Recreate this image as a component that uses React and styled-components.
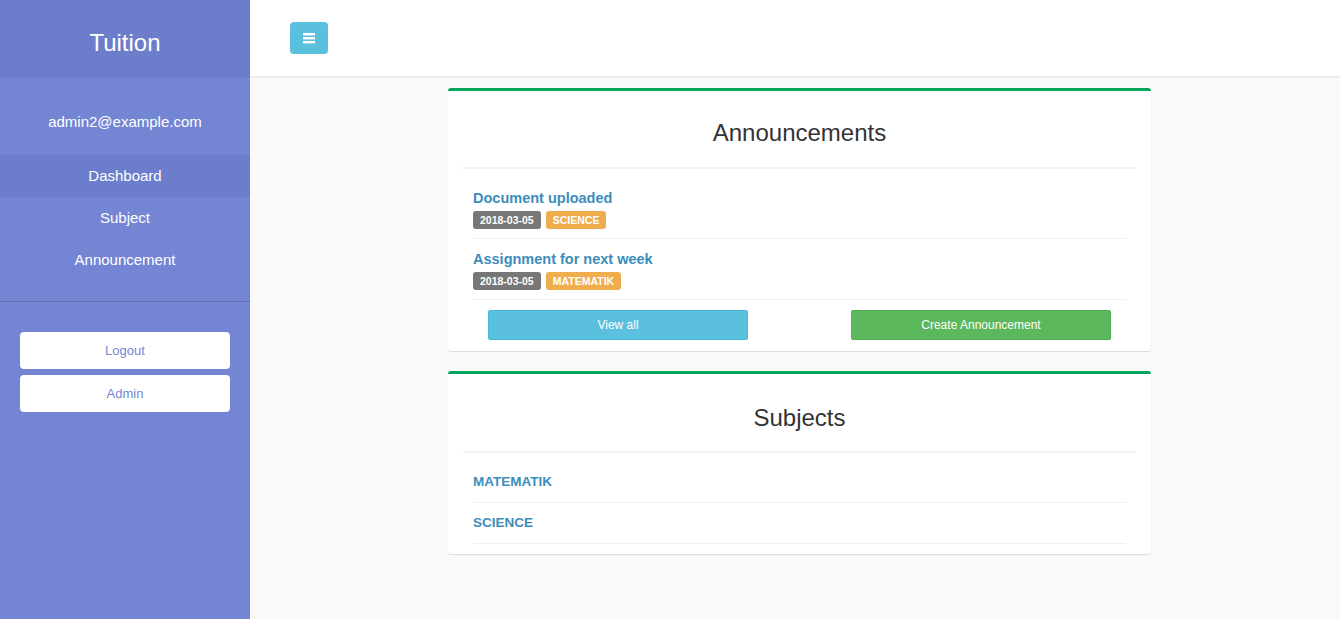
import * as React from 'react';
import styled, { createGlobalStyle } from 'styled-components';

const GlobalStyle = createGlobalStyle`
  html, body {
    margin: 0;
    padding: 0;
    height: 100%;
  }
  body {
    font-family: "Liberation Sans", Arial, sans-serif;
    font-size: 14px;
    color: #333;
    background: #f9f9f9;
  }
  * {
    box-sizing: border-box;
  }
`;

const Layout = styled.div`
  display: flex;
  min-height: 619px;
`;

const Sidebar = styled.aside`
  width: 250px;
  flex-shrink: 0;
  background: #7485d4;
  color: #fff;
  display: flex;
  flex-direction: column;
`;

const Brand = styled.div`
  height: 78px;
  background: #6c7ecb;
  display: flex;
  align-items: center;
  justify-content: center;
  font-size: 24px;
  padding-top: 8px;
`;

const UserEmail = styled.div`
  height: 77px;
  display: flex;
  align-items: center;
  justify-content: center;
  font-size: 15px;
  padding-top: 9px;
`;

const Nav = styled.nav`
  display: flex;
  flex-direction: column;
  padding-bottom: 20px;
  border-bottom: 1px solid #5d6fae;
`;

const NavItem = styled.a`
  height: 42px;
  display: flex;
  align-items: center;
  justify-content: center;
  font-size: 15px;
  color: #fff;
  text-decoration: none;
  padding-bottom: 2px;
  background: ${p => (p.active ? '#6c7ecb' : 'transparent')};
`;

const SideActions = styled.div`
  display: flex;
  flex-direction: column;
  gap: 6px;
  padding: 30px 20px;
`;

const SideButton = styled.button`
  height: 37px;
  border: none;
  border-radius: 4px;
  background: #fff;
  color: #7485d4;
  font-family: "Liberation Sans", Arial, sans-serif;
  font-size: 13px;
`;

const Main = styled.div`
  flex: 1;
  display: flex;
  flex-direction: column;
`;

const Topbar = styled.header`
  height: 76px;
  background: #fff;
  box-shadow: 0 1px 2px rgba(0, 0, 0, 0.1);
  display: flex;
  align-items: center;
  padding: 0 40px;
`;

const Toggle = styled.button`
  width: 38px;
  height: 32px;
  border: none;
  border-radius: 4px;
  background: #5bc0de;
  display: flex;
  align-items: center;
  justify-content: center;
  padding: 0;
`;

const Content = styled.main`
  padding: 12px 0 40px 198px;
  display: flex;
  flex-direction: column;
  gap: 20px;
`;

const Card = styled.section`
  width: 703px;
  background: #fff;
  border-top: 3px solid #00a65a;
  border-radius: 3px;
  box-shadow: 0 1px 1px rgba(0, 0, 0, 0.12);
`;

const CardHeader = styled.div`
  margin: 0 15px;
  padding: ${p => (p.tall ? '31px 0 20px' : '29px 0 21px')};
  border-bottom: 2px solid #f1f1f1;
  text-align: center;
`;

const CardTitle = styled.h3`
  margin: 0;
  font-size: 24px;
  font-weight: normal;
  line-height: 26px;
  color: #333;
`;

const List = styled.ul`
  list-style: none;
  margin: 9px 25px 0;
  padding: 0;
`;

const Item = styled.li`
  padding: 10px 0 ${p => (p.compact ? '10px' : '9px')};
  border-bottom: 1px solid #f0f0f0;
`;

const ItemTitle = styled.a`
  display: block;
  font-size: ${p => (p.upper ? '13.5px' : '14.5px')};
  line-height: 20px;
  font-weight: bold;
  color: #3c8dbc;
  text-decoration: none;
  text-transform: ${p => (p.upper ? 'uppercase' : 'none')};
`;

const Labels = styled.div`
  display: flex;
  gap: 5px;
  margin-top: 3px;
`;

const Label = styled.span`
  display: inline-block;
  height: 18px;
  line-height: 18px;
  padding: 0 7px;
  border-radius: 3px;
  font-size: 10.5px;
  font-weight: bold;
  color: #fff;
  background: ${p => p.bg};
`;

const CardFooter = styled.div`
  display: flex;
  justify-content: space-between;
  padding: 10px 40px 11px;
`;

const FooterButton = styled.button`
  width: 260px;
  height: 30px;
  border-radius: 2px;
  border: 1px solid ${p => p.border};
  background: ${p => p.bg};
  color: #fff;
  font-family: "Liberation Sans", Arial, sans-serif;
  font-size: 12px;
`;

const SubjectFooter = styled.div`
  height: 10px;
`;

function MenuIcon() {
  return (
    <svg width="12" height="12" viewBox="0 0 12 12">
      <rect x="0" y="1" width="12" height="2.4" fill="#fff" />
      <rect x="0" y="5" width="12" height="2.4" fill="#fff" />
      <rect x="0" y="9" width="12" height="2.4" fill="#fff" />
    </svg>
  );
}

const announcements = [
  { title: 'Document uploaded', date: '2018-03-05', subject: 'SCIENCE' },
  { title: 'Assignment for next week', date: '2018-03-05', subject: 'MATEMATIK' },
];

const subjects = ['MATEMATIK', 'SCIENCE'];

export default function App() {
  return (
    <>
      <GlobalStyle />
      <Layout>
        <Sidebar>
          <Brand>Tuition</Brand>
          <UserEmail>admin2@example.com</UserEmail>
          <Nav>
            <NavItem active>Dashboard</NavItem>
            <NavItem>Subject</NavItem>
            <NavItem>Announcement</NavItem>
          </Nav>
          <SideActions>
            <SideButton>Logout</SideButton>
            <SideButton>Admin</SideButton>
          </SideActions>
        </Sidebar>
        <Main>
          <Topbar>
            <Toggle>
              <MenuIcon />
            </Toggle>
          </Topbar>
          <Content>
            <Card>
              <CardHeader>
                <CardTitle>Announcements</CardTitle>
              </CardHeader>
              <List>
                {announcements.map(a => (
                  <Item key={a.title}>
                    <ItemTitle>{a.title}</ItemTitle>
                    <Labels>
                      <Label bg="#777">{a.date}</Label>
                      <Label bg="#f0ad4e">{a.subject}</Label>
                    </Labels>
                  </Item>
                ))}
              </List>
              <CardFooter>
                <FooterButton bg="#5bc0de" border="#46b8da">View all</FooterButton>
                <FooterButton bg="#5cb85c" border="#4cae4c">Create Announcement</FooterButton>
              </CardFooter>
            </Card>
            <Card>
              <CardHeader tall>
                <CardTitle>Subjects</CardTitle>
              </CardHeader>
              <List>
                {subjects.map(s => (
                  <Item key={s} compact>
                    <ItemTitle upper>{s}</ItemTitle>
                  </Item>
                ))}
              </List>
              <SubjectFooter />
            </Card>
          </Content>
        </Main>
      </Layout>
    </>
  );
}
